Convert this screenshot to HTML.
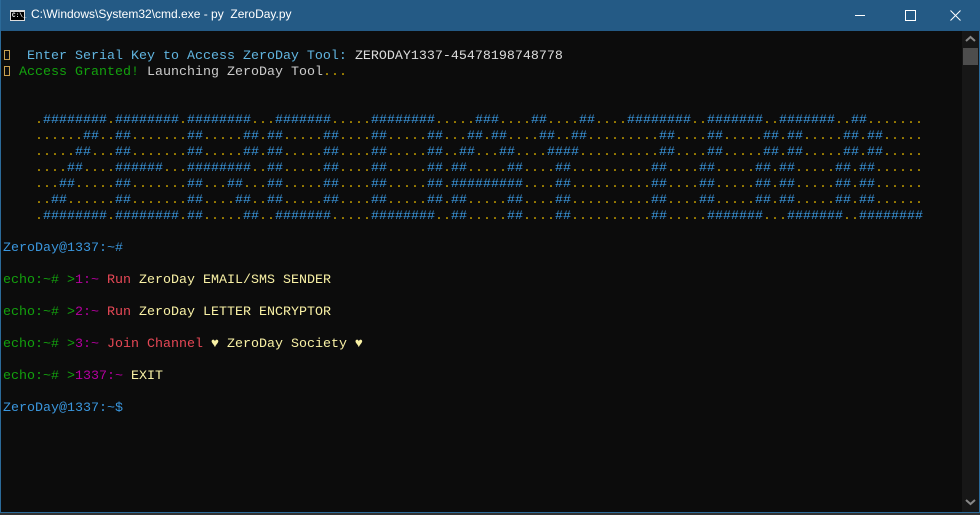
<!DOCTYPE html>
<html><head><meta charset="utf-8"><style>
*{margin:0;padding:0;box-sizing:border-box}
html,body{width:980px;height:515px;overflow:hidden;background:#333}
.win{position:absolute;left:0;top:0;width:980px;height:513px;background:#0c0c0c;border:1px solid #2b6a99;border-top:none}
.title{position:absolute;left:0;top:0;width:980px;height:31px;background:#245a85}
.title .t{position:absolute;left:30px;top:7px;font:12px "Liberation Sans",sans-serif;color:#fff}
.ico{position:absolute;left:9px;top:10px;width:15px;height:11px;background:#000;border:1px solid #ddd;border-top-width:2px}
.ico:after{content:"C:\\_";position:absolute;left:1px;top:0;font:bold 6px "Liberation Mono",monospace;color:#fff}
.ctl{position:absolute;top:0;height:31px;width:46px}
.sb{position:absolute;left:961px;top:31px;width:17px;height:481px;background:#171717}
.thumb{position:absolute;left:1px;top:17px;width:15px;height:17px;background:#4d4d4d}
.con{position:absolute;left:2px;top:49px;font:13.33px/16px "Liberation Mono",monospace;white-space:pre;color:#ccc}
.b{color:#3a96dd}.g{color:#13a10e}.y{color:#c19c00}.m{color:#b4009e}.r{color:#e74856}.w{color:#f9f1a5}.c{color:#61b5e0}
.bx{display:inline-block;width:6px;height:10px;border:1px solid #c8a050;vertical-align:-1px;margin:0 1px}
.h{color:#3a96dd}.d{color:#c19c00}
</style></head><body>
<div class="win">
<div class="title"><div class="ico"></div><div class="t">C:\Windows\System32\cmd.exe - py&nbsp; ZeroDay.py</div>
<svg class="ctl" style="left:835px" viewBox="0 0 46 31"><line x1="19" y1="15.5" x2="29" y2="15.5" stroke="#fff"/></svg>
<svg class="ctl" style="left:885px" viewBox="0 0 46 31"><rect x="19.5" y="10.5" width="10" height="10" fill="none" stroke="#fff"/></svg>
<svg class="ctl" style="left:931px" viewBox="0 0 46 31"><path d="M18.5 10.5l10 10M28.5 10.5l-10 10" stroke="#fff"/></svg>
</div>
<div class="sb"><svg style="position:absolute;left:3px;top:4px" width="11" height="8"><path d="M1 6l4.5-4 4.5 4" stroke="#888" stroke-width="2" fill="none"/></svg><div class="thumb"></div>
<svg style="position:absolute;left:3px;top:467px" width="11" height="8"><path d="M1 2l4.5 4 4.5-4" stroke="#888" stroke-width="2" fill="none"/></svg></div>
<div class="con"><span class="bx"></span><span class="c">  Enter Serial Key to Access ZeroDay Tool: </span><span style="color:#ddd">ZERODAY1337-45478198748778</span>
<span class="bx"></span><span class="g"> Access Granted!</span><span style="color:#ccc"> Launching ZeroDay Tool</span><span class="y">...</span>


<span id="ban"></span>

<span class="b">ZeroDay@1337:~#</span>

<span class="g">echo:~# &gt;</span><span class="m">1:~</span> <span class="r">Run</span> <span class="w">ZeroDay EMAIL/SMS SENDER</span>

<span class="g">echo:~# &gt;</span><span class="m">2:~</span> <span class="r">Run</span> <span class="w">ZeroDay LETTER ENCRYPTOR</span>

<span class="g">echo:~# &gt;</span><span class="m">3:~</span> <span class="r">Join Channel</span> <span class="w">♥ ZeroDay Society ♥</span>

<span class="g">echo:~# &gt;</span><span class="m">1337:~</span> <span class="w">EXIT</span>

<span class="b">ZeroDay@1337:~$</span></div>
</div>
<script>
var L=[
".########.########.########...#######.....########.....###....##....##....########..#######..#######..##......",
"......##..##.......##.....##.##.....##....##.....##...##.##....##..##.........##....##.....##.##.....##.##......",
".....##...##.......##.....##.##.....##....##.....##..##...##....####..........##....##.....##.##.....##.##......",
"....##....######...########..##.....##....##.....##.##.....##....##...........##....##.....##.##.....##.##......",
"...##.....##.......##...##...##.....##....##.....##.#########....##...........##....##.....##.##.....##.##......",
"..##......##.......##....##..##.....##....##.....##.##.....##....##...........##....##.....##.##.....##.##......",
".########.########.##.....##..#######.....########..##.....##....##..........##.....#######...#######..########"];
var h="";L.forEach(function(l,i){
if(i<6){l=l.replace(/\.{11}##/,"..........##");}
while(l.length<111)l+=".";l=l.slice(0,111);
h+="    "+l.replace(/(#+)/g,'<span class="h">$1</span>').replace(/(\.+)/g,'<span class="d">$1</span>')+(i<6?"\n":"");});
document.getElementById("ban").innerHTML=h;
</script>
</body></html>
